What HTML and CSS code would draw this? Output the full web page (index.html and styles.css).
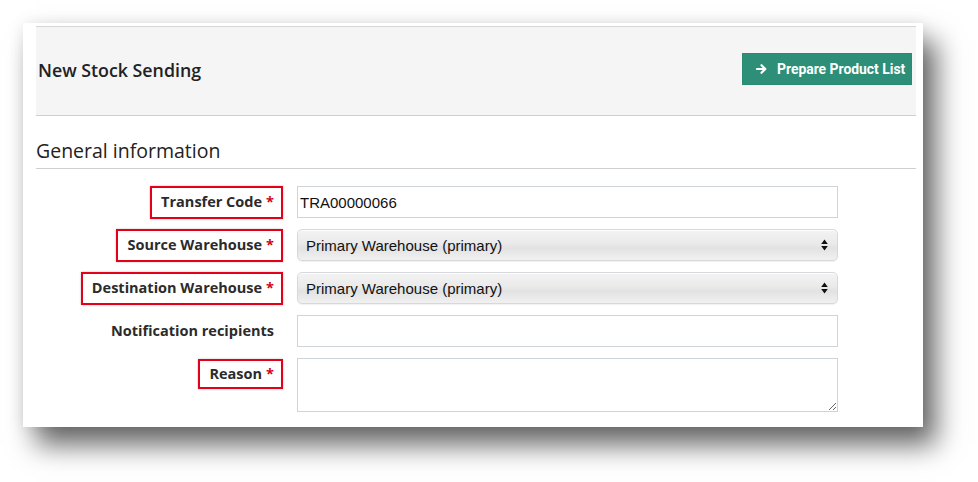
FILE: index.html
```html
<!DOCTYPE html>
<html>
<head>
<meta charset="utf-8">
<link rel="stylesheet" href="styles.css">
</head>
<body>
<div class="page">
<div class="panel">
  <div class="header">
    <h1 class="title">New Stock Sending</h1>
    <button class="btn-primary" type="button">
      <svg class="btn-icon" width="11" height="10" viewBox="0 0 11 10"><path d="M1 5H9M5.5 1.2L9.3 5L5.5 8.8" fill="none" stroke="#fff" stroke-width="2.2" stroke-linecap="round" stroke-linejoin="round"/></svg>
      <span>Prepare Product List</span>
    </button>
  </div>
  <h2 class="section-title">General information</h2>
  <div class="form">
    <div class="label-cell"><span class="label required">Transfer Code <b class="star">*</b></span></div>
    <div class="field"><input class="text-input" type="text" value="TRA00000066"></div>

    <div class="label-cell"><span class="label required">Source Warehouse <b class="star">*</b></span></div>
    <div class="field"><div class="select"><span>Primary Warehouse (primary)</span><svg class="updown" width="7" height="12" viewBox="0 0 7 12"><path d="M3.5 0.5L6.8 5H0.2Z M3.5 11.5L6.8 7H0.2Z" fill="#111"/></svg></div></div>

    <div class="label-cell"><span class="label required">Destination Warehouse <b class="star">*</b></span></div>
    <div class="field"><div class="select"><span>Primary Warehouse (primary)</span><svg class="updown" width="7" height="12" viewBox="0 0 7 12"><path d="M3.5 0.5L6.8 5H0.2Z M3.5 11.5L6.8 7H0.2Z" fill="#111"/></svg></div></div>

    <div class="label-cell"><span class="label">Notification recipients</span></div>
    <div class="field"><input class="text-input" type="text" value=""></div>

    <div class="label-cell"><span class="label required short">Reason <b class="star">*</b></span></div>
    <div class="field"><textarea class="textarea"></textarea></div>
  </div>
</div>
</div>
</body>
</html>
```

FILE: styles.css
```css
html, body {
  margin: 0;
  padding: 0;
  background: #ffffff;
}
body {
  font-family: "Open Sans", "Noto Sans", sans-serif;
  color: #2b2b2b;
}
.page {
  padding: 23px 0 55px 23px;
}
.panel {
  box-sizing: border-box;
  width: 900px;
  height: 404px;
  background: #fff;
  padding: 3px 7px 0 13px;
  box-shadow: 13px 18px 26px rgba(0, 0, 0, 0.6), 0 0 14px rgba(0, 0, 0, 0.08);
}
.header {
  box-sizing: border-box;
  height: 90px;
  background: #f5f5f5;
  border-top: 1px solid #d6d6d6;
  border-bottom: 1px solid #cfcfcf;
  display: flex;
  align-items: center;
  justify-content: space-between;
  padding: 0 4px 0 2px;
}
.title {
  margin: -2px 0 0 0;
  font-size: 17.8px;
  font-weight: 600;
  color: #222;
}
.btn-primary {
  display: flex;
  align-items: center;
  height: 32px;
  width: 170px;
  padding: 0 0 0 13px;
  border: 1px solid #2a8a72;
  background: #2d8f77;
  color: #fff;
  font-family: "Roboto", "Liberation Sans", sans-serif;
  font-weight: 700;
  font-size: 13.9px;
  margin-top: -4px;
  cursor: pointer;
}
.btn-icon {
  margin-right: 10px;
}
.section-title {
  margin: 21px 0 0 0;
  padding-bottom: 4px;
  border-bottom: 1px solid #cfcfcf;
  font-size: 19.5px;
  font-weight: 400;
  line-height: 27px;
  color: #222;
}
.form {
  margin-top: 17px;
  display: grid;
  grid-template-columns: 247px 541px;
  column-gap: 14px;
  grid-auto-rows: 32px;
  row-gap: 11px;
}
.form > .field:last-child {
  height: 54px;
}
.label-cell {
  display: flex;
  justify-content: flex-end;
  align-items: flex-start;
}
.label {
  box-sizing: border-box;
  display: inline-flex;
  align-items: center;
  height: 33px;
  padding: 0 7px 2px 9px;
  border: 2px solid transparent;
  font-size: 14.5px;
  font-weight: 700;
  color: #2b2b2b;
  white-space: nowrap;
}
.label.required {
  border-color: #e2001a;
  box-shadow: 0 0 2px rgba(0, 0, 0, 0.25);
}
.label.short {
  height: 30px;
  margin-top: 1px;
}
.star {
  color: #d0021b;
  margin-left: 4px;
  font-weight: 700;
}
.field {
  display: flex;
}
.text-input {
  box-sizing: border-box;
  width: 541px;
  height: 32px;
  border: 1px solid #cfd3da;
  padding: 0 0 0 2px;
  font-family: "Liberation Sans", Arial, sans-serif;
  font-size: 15px;
  color: #111;
  background: #fff;
  outline: none;
}
.select {
  box-sizing: border-box;
  width: 541px;
  height: 32px;
  border: 1px solid #d6d8dc;
  border-radius: 5px;
  background: linear-gradient(#f3f3f3 0%, #eaeaea 45%, #e2e2e2 60%, #f1f1f1 100%);
  box-shadow: inset 0 1px 0 #fdfdfd, 0 1px 1px rgba(0,0,0,0.06);
  display: flex;
  align-items: center;
  justify-content: space-between;
  padding: 0 9px 0 8px;
  font-family: "Liberation Sans", Arial, sans-serif;
  font-size: 15px;
  color: #111;
}
.textarea {
  box-sizing: border-box;
  width: 541px;
  height: 54px;
  border: 1px solid #cfd3da;
  resize: vertical;
  background: #fff;
  outline: none;
}
```
